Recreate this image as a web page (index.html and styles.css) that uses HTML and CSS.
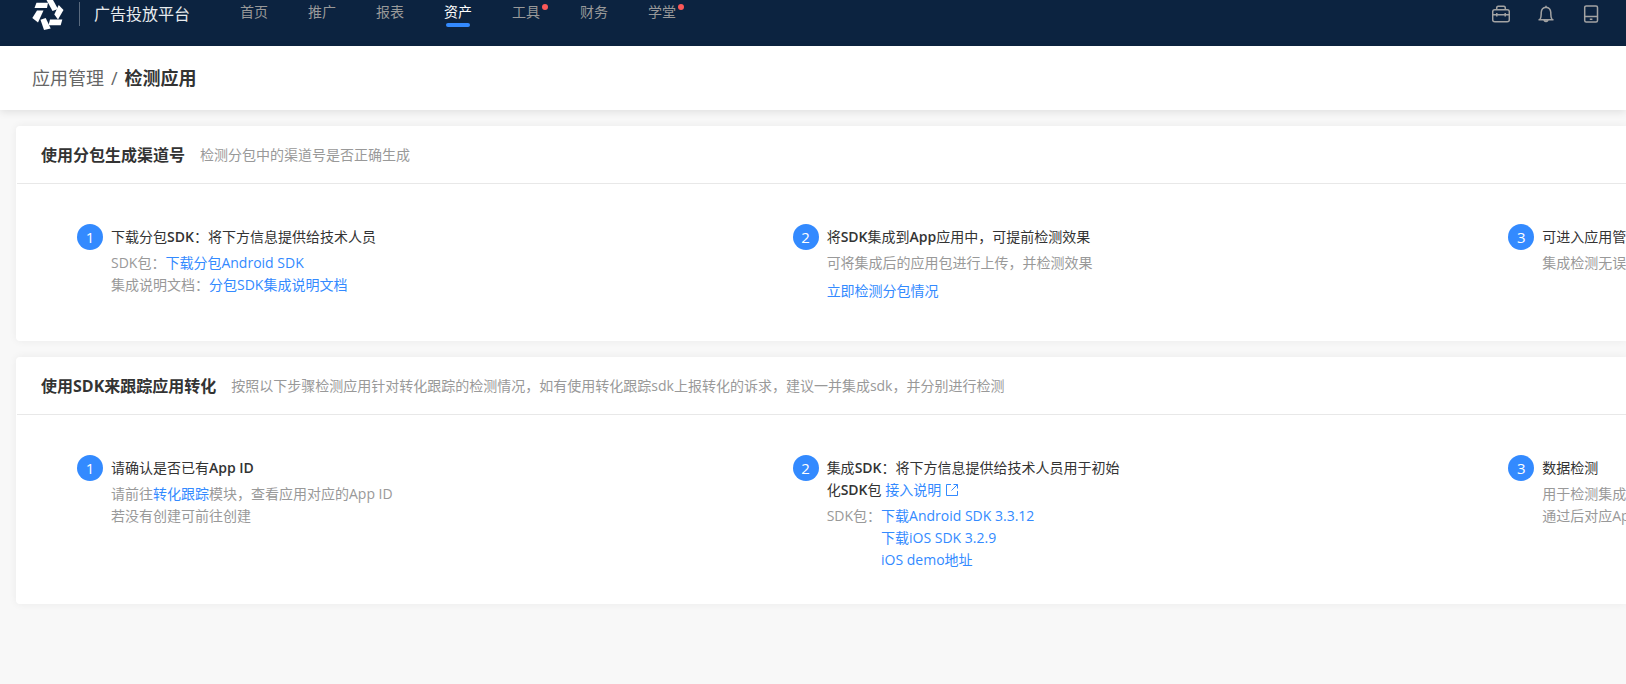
FILE: index.html
```html
<!DOCTYPE html>
<html lang="zh-CN">
<head>
<meta charset="utf-8">
<title>检测应用 - 广告投放平台</title>
<meta name="viewport" content="width=device-width, initial-scale=1">
<link rel="stylesheet" href="styles.css">
</head>
<body>
<header class="topbar">
  <svg class="logo" viewBox="0 0 32 32" fill="#fff" aria-hidden="true">
    <path d="M4.500 2.700H16L15 8H2.500Z"/>
    <path d="M14.500 0H21L26 9L20.500 11Z"/>
    <path d="M26.700 5L31.500 10L26 19.500L22.300 14.500Z"/>
    <path d="M18 19.500H30.300L28.700 25.300H16.500Z"/>
    <path d="M8.500 19.700L13.700 18L18.700 28.500L12 30Z"/>
    <path d="M5 10.500H11.500L6 22.500L0.300 18Z"/>
  </svg>
  <span class="brand">广告投放平台</span>
  <nav class="nav">
    <a class="nav-link" href="#">首页</a>
    <a class="nav-link" href="#">推广</a>
    <a class="nav-link" href="#">报表</a>
    <a class="nav-link active" href="#">资产</a>
    <a class="nav-link dot" href="#">工具</a>
    <a class="nav-link" href="#">财务</a>
    <a class="nav-link dot" href="#">学堂</a>
  </nav>
  <div class="tools">
    <button class="tool" type="button" aria-label="工具箱">
      <svg viewBox="0 0 18 18"><rect x="0.700" y="4.700" width="16.600" height="12" rx="2"/><path d="M4.700 4.500V3.200Q4.700 1.200 6.200 1.200H11.800Q13.300 1.200 13.300 3.200V4.500M1 9.700H17M4.800 8V11.500M13.200 8V11.500"/></svg>
    </button>
    <button class="tool" type="button" aria-label="通知">
      <svg viewBox="0 0 18 18"><path d="M1.500 14.800H16.500M3 14.500Q4.200 12.500 4.200 9V7.500Q4.500 2.500 9 2.200Q13.500 2.500 13.800 7.500V9Q13.800 12.500 15 14.500M9 2V0.700M7 15.200Q9 18 11 15.200"/></svg>
    </button>
    <button class="tool" type="button" aria-label="移动端">
      <svg viewBox="0 0 18 18"><rect x="2.700" y="0.900" width="12.800" height="16" rx="1.500"/><path d="M3 11.500H15M7.800 14.300H10.400"/></svg>
    </button>
  </div>
</header>

<div class="crumbs">
  <a class="crumb" href="#">应用管理</a>
  <span class="slash">/</span>
  <h1 class="current">检测应用</h1>
</div>

<main class="main">
  <section class="card">
    <div class="card-head">
      <h2 class="card-title">使用分包生成渠道号</h2>
      <p class="card-note">检测分包中的渠道号是否正确生成</p>
    </div>
    <div class="steps">
      <div class="step">
        <span class="num">1</span>
        <div class="text">
          <h3 class="step-title">下载分包<b>SDK</b>：将下方信息提供给技术人员</h3>
          <p>SDK包：<a href="#">下载分包Android SDK</a></p>
          <p>集成说明文档：<a href="#">分包SDK集成说明文档</a></p>
        </div>
      </div>
      <div class="step">
        <span class="num">2</span>
        <div class="text">
          <h3 class="step-title">将<b>SDK</b>集成到<b>App</b>应用中，可提前检测效果</h3>
          <p>可将集成后的应用包进行上传，并检测效果</p>
          <p class="action"><a href="#">立即检测分包情况</a></p>
        </div>
      </div>
      <div class="step">
        <span class="num">3</span>
        <div class="text">
          <h3 class="step-title">可进入应用管</h3>
          <p>集成检测无误</p>
        </div>
      </div>
    </div>
  </section>

  <section class="card">
    <div class="card-head">
      <h2 class="card-title">使用SDK来跟踪应用转化</h2>
      <p class="card-note">按照以下步骤检测应用针对转化跟踪的检测情况，如有使用转化跟踪sdk上报转化的诉求，建议一并集成sdk，并分别进行检测</p>
    </div>
    <div class="steps">
      <div class="step">
        <span class="num">1</span>
        <div class="text">
          <h3 class="step-title">请确认是否已有<b>App ID</b></h3>
          <p>请前往<a href="#">转化跟踪</a>模块，查看应用对应的App ID</p>
          <p>若没有创建可前往创建</p>
        </div>
      </div>
      <div class="step">
        <span class="num">2</span>
        <div class="text">
          <h3 class="step-title">集成<b>SDK</b>：将下方信息提供给技术人员用于初始化<b>SDK</b>包 <a class="doc" href="#">接入说明<svg class="ext" viewBox="0 0 14 14" aria-hidden="true"><path d="M6 1.500H1.500V12.500H12.500V8M8.500 1.500H12.500V5.500M12.500 1.500L6.500 7.500"/></svg></a></h3>
          <div class="packs">
            <span>SDK包：</span>
            <ul class="links">
              <li><a href="#">下载Android SDK 3.3.12</a></li>
              <li><a href="#">下载iOS SDK 3.2.9</a></li>
              <li><a href="#">iOS demo地址</a></li>
            </ul>
          </div>
        </div>
      </div>
      <div class="step">
        <span class="num">3</span>
        <div class="text">
          <h3 class="step-title">数据检测</h3>
          <p>用于检测集成</p>
          <p>通过后对应App</p>
        </div>
      </div>
    </div>
  </section>
</main>
</body>
</html>
```
FILE: styles.css
```css
* {
  box-sizing: border-box;
}

body {
  margin: 0;
  min-height: 100vh;
  overflow-x: hidden;
  background: #f8f8f8;
  color: #999;
  font: 14px/22px "Open Sans", "Noto Sans CJK SC", sans-serif;
}

h1, h2, h3, p, ul {
  margin: 0;
  padding: 0;
  font-size: inherit;
  font-weight: 400;
}

a {
  color: #338aff;
  text-decoration: none;
}

.topbar {
  display: flex;
  align-items: flex-start;
  height: 46px;
  padding: 0 26px 0 32px;
  background: #0c2340;
}

.logo {
  width: 32px;
  height: 32px;
}

.brand {
  margin: 2px 0 0 15px;
  padding-left: 14px;
  border-left: 1px solid #5a6a7e;
  color: #e8ebee;
  font-size: 16px;
  line-height: 24px;
}

.nav {
  display: flex;
  gap: 40px;
  margin-left: 50px;
}

.nav-link {
  position: relative;
  padding: 1px 0;
  color: #999;
}

.nav-link.active {
  color: #fff;
}

.nav-link.active::after {
  content: "";
  position: absolute;
  left: 2px;
  right: 2px;
  top: 23px;
  height: 4px;
  border-radius: 2px;
  background: #338aff;
}

.nav-link.dot::after {
  content: "";
  position: absolute;
  top: 4px;
  right: -8px;
  width: 6px;
  height: 6px;
  border-radius: 50%;
  background: #fb5858;
}

.tools {
  display: flex;
  gap: 27px;
  margin: 5px 0 0 auto;
}

.tool {
  width: 18px;
  height: 18px;
  padding: 0;
  border: 0;
  background: none;
}

.tool svg {
  display: block;
  fill: none;
  stroke: #a3a3a3;
  stroke-width: 1.500;
}

.crumbs {
  position: relative;
  display: flex;
  align-items: center;
  gap: 7px;
  height: 64px;
  padding: 0 32px;
  background: #fff;
  box-shadow: 0 2px 8px rgba(0, 0, 0, 0.1);
  color: #666;
  font-size: 18px;
}

.crumb {
  color: #666;
}

.current {
  color: #333;
  font-weight: 700;
}

.main {
  display: flex;
  flex-direction: column;
  gap: 16px;
  padding: 16px 0 16px 16px;
}

.card {
  overflow: hidden;
  border: 1px solid #fff;
  border-right: 0;
  border-radius: 4px 0 0 4px;
  background: #fff;
  box-shadow: 0 0 8px rgba(0, 0, 0, 0.06);
}

.card-head {
  display: flex;
  align-items: center;
  gap: 15px;
  height: 57px;
  padding: 0 24px;
  border-bottom: 1px solid #e8e8e8;
}

.card-title {
  color: #333;
  font-size: 16px;
  font-weight: 700;
}

.steps {
  display: flex;
  padding: 40px 0 32px 60px;
}

.step {
  display: flex;
  flex: 0 0 46.2%;
  align-items: flex-start;
  gap: 8px;
}

.num {
  width: 26px;
  height: 26px;
  border-radius: 50%;
  background: #338aff;
  color: #fff;
  font-size: 15px;
  line-height: 26px;
  text-align: center;
}

.text {
  max-width: 300px;
  padding-top: 2px;
}

.step-title {
  margin-bottom: 4px;
  color: #333;
}

.step-title b {
  font-weight: 600;
}

.action {
  line-height: 34px;
}

.ext {
  width: 14px;
  height: 14px;
  margin-left: 4px;
  vertical-align: -2px;
  fill: none;
  stroke: #338aff;
}

.packs {
  display: flex;
}

.links {
  list-style: none;
}
```
